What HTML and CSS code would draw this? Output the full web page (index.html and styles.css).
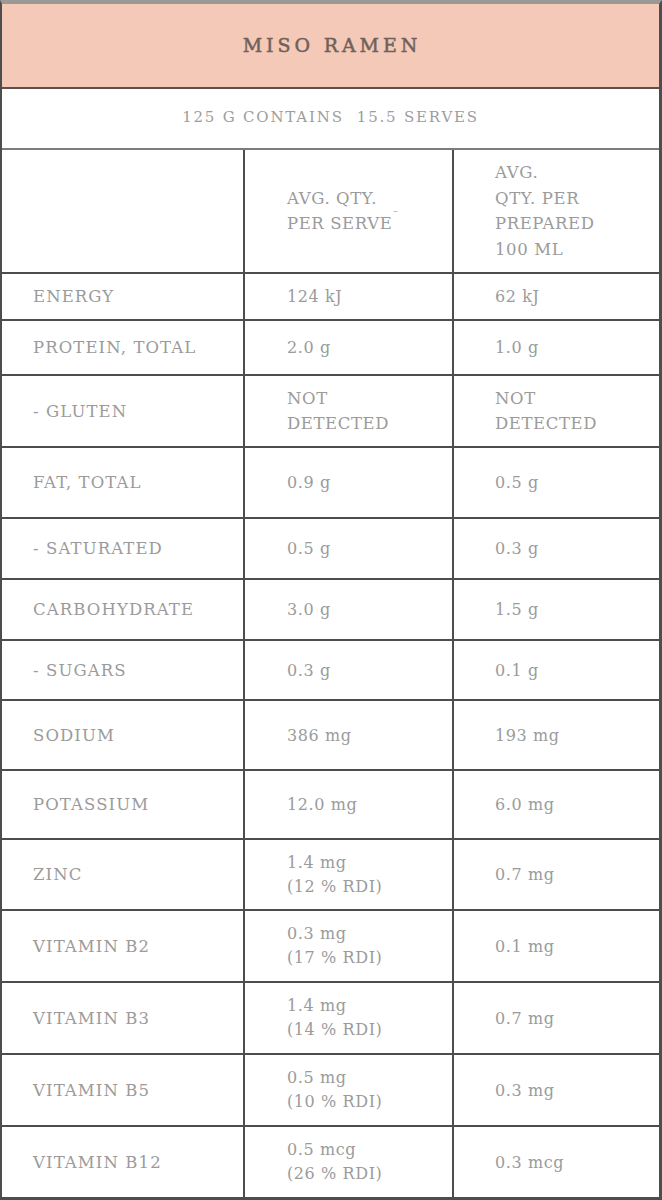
FILE: index.html
```html
<!DOCTYPE html>
<html>
<head>
<meta charset="utf-8">
<link rel="stylesheet" href="styles.css">
</head>
<body>
<div class="panel">
  <div class="title">MISO RAMEN</div>
  <div class="subtitle">125 G CONTAINS&nbsp; 15.5 SERVES</div>

  <div class="row h122">
    <div class="cell c1"></div>
    <div class="cell c2 head">AVG. QTY.<br>PER SERVE<sup>–</sup></div>
    <div class="cell c3 head">AVG.<br>QTY. PER<br>PREPARED<br>100 ML</div>
  </div>

  <div class="row h45"><div class="cell c1">ENERGY</div><div class="cell c2 val">124 kJ</div><div class="cell c3 val">62 kJ</div></div>
  <div class="row h53"><div class="cell c1">PROTEIN, TOTAL</div><div class="cell c2 val">2.0 g</div><div class="cell c3 val">1.0 g</div></div>
  <div class="row h70"><div class="cell c1">- GLUTEN</div><div class="cell c2 head">NOT<br>DETECTED</div><div class="cell c3 head">NOT<br>DETECTED</div></div>
  <div class="row h69"><div class="cell c1">FAT, TOTAL</div><div class="cell c2 val">0.9 g</div><div class="cell c3 val">0.5 g</div></div>
  <div class="row h59"><div class="cell c1">- SATURATED</div><div class="cell c2 val">0.5 g</div><div class="cell c3 val">0.3 g</div></div>
  <div class="row h59"><div class="cell c1">CARBOHYDRATE</div><div class="cell c2 val">3.0 g</div><div class="cell c3 val">1.5 g</div></div>
  <div class="row h58"><div class="cell c1">- SUGARS</div><div class="cell c2 val">0.3 g</div><div class="cell c3 val">0.1 g</div></div>
  <div class="row h68"><div class="cell c1">SODIUM</div><div class="cell c2 val">386 mg</div><div class="cell c3 val">193 mg</div></div>
  <div class="row h67"><div class="cell c1">POTASSIUM</div><div class="cell c2 val">12.0 mg</div><div class="cell c3 val">6.0 mg</div></div>
  <div class="row h69"><div class="cell c1">ZINC</div><div class="cell c2 val two">1.4 mg<br>(12 % RDI)</div><div class="cell c3 val">0.7 mg</div></div>
  <div class="row h70"><div class="cell c1">VITAMIN B2</div><div class="cell c2 val two">0.3 mg<br>(17 % RDI)</div><div class="cell c3 val">0.1 mg</div></div>
  <div class="row h70"><div class="cell c1">VITAMIN B3</div><div class="cell c2 val two">1.4 mg<br>(14 % RDI)</div><div class="cell c3 val">0.7 mg</div></div>
  <div class="row h70"><div class="cell c1">VITAMIN B5</div><div class="cell c2 val two">0.5 mg<br>(10 % RDI)</div><div class="cell c3 val">0.3 mg</div></div>
  <div class="row h70 last"><div class="cell c1">VITAMIN B12</div><div class="cell c2 val two">0.5 mcg<br>(26 % RDI)</div><div class="cell c3 val">0.3 mcg</div></div>
</div>
</body>
</html>
```

FILE: styles.css
```css
html, body {
  margin: 0;
  padding: 0;
  background: #ffffff;
}

.panel {
  width: 662px;
  box-sizing: border-box;
  border-top: 4px solid #9c9896;
  border-left: 2px solid #4d4d4d;
  border-right: 3px solid #4d4d4d;
  border-bottom: 3px solid #4d4d4d;
  font-family: "DejaVu Serif", "Liberation Serif", serif;
  color: #9b9b9b;
}

.title {
  background: #f5c9b7;
  border-bottom: 2px solid #5a504c;
  display: flex;
  align-items: center;
  justify-content: center;
  font-size: 19px;
  font-weight: normal;
  -webkit-text-stroke: 0.5px #6f625b;
  letter-spacing: 3.9px;
  color: #6f625b;
  padding-left: 3px;
  padding-bottom: 2px;
  box-sizing: border-box;
  height: 85px;
}

.subtitle {
  border-bottom: 2px solid #7c7c7c;
  display: flex;
  align-items: center;
  justify-content: center;
  font-size: 15px;
  letter-spacing: 1.8px;
  color: #9d9d9d;
  padding-bottom: 3px;
  box-sizing: content-box;
  height: 56px;
}

.row {
  display: grid;
  grid-template-columns: 243px 209px 1fr;
  border-bottom: 2px solid #4d4d4d;
  box-sizing: border-box;
}

.row.last {
  border-bottom: 0;
}

.cell {
  display: flex;
  align-items: center;
  box-sizing: border-box;
  font-size: 16.5px;
  letter-spacing: 1.1px;
}

.c1 {
  padding-left: 31px;
  border-right: 2px solid #4d4d4d;
}

.c2 {
  padding-left: 42px;
  border-right: 2px solid #4d4d4d;
}

.c3 {
  padding-left: 41px;
}

.head {
  line-height: 25.5px;
  font-size: 16.5px;
  letter-spacing: 0.6px;
}

.head sup {
  font-size: 9px;
  vertical-align: 8px;
  line-height: 0;
  margin-left: 1px;
}

.val {
  font-size: 16px;
  letter-spacing: 0.6px;
}

.two {
  line-height: 24px;
}

.h122 { height: 124px; }
.h45 { height: 47px; }
.h53 { height: 55px; }
.h58 { height: 60px; }
.h59 { height: 61px; }
.h67 { height: 69px; }
.h68 { height: 70px; }
.h69 { height: 71px; }
.h70 { height: 72px; }
.row.last.h70 { height: 70px; }
```
